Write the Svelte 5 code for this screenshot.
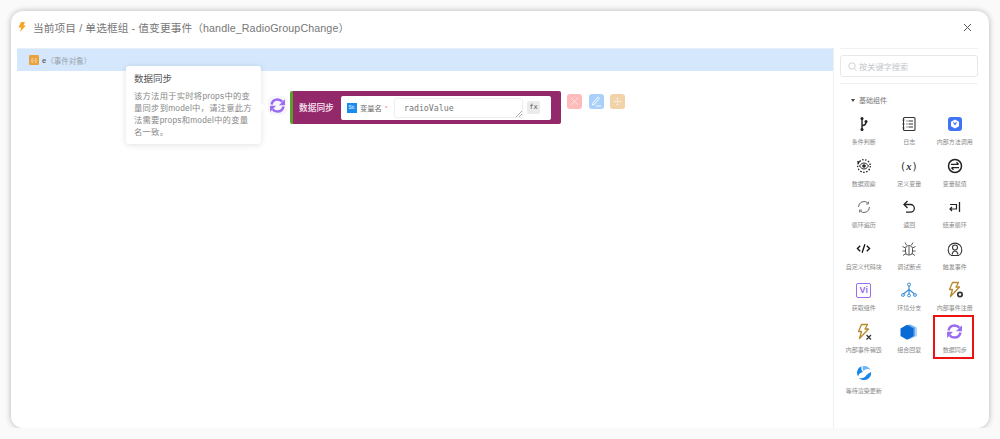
<script>
  const palette = [
    { id: "branch", label: "条件判断" },
    { id: "log", label: "日志" },
    { id: "method", label: "内部方法调用" },
    { id: "watch", label: "数据观察" },
    { id: "define", label: "定义变量" },
    { id: "assign", label: "变量赋值" },
    { id: "loop", label: "循环遍历" },
    { id: "back", label: "返回" },
    { id: "endloop", label: "结束循环" },
    { id: "code", label: "自定义代码块" },
    { id: "debug", label: "调试断点" },
    { id: "trigger", label: "触发事件" },
    { id: "vi", label: "获取组件" },
    { id: "env", label: "环境分支" },
    { id: "reg", label: "内部事件注册" },
    { id: "unreg", label: "内部事件销毁" },
    { id: "combo", label: "组合回复" },
    { id: "sync", label: "数据同步", active: true },
    { id: "wait", label: "等待渲染更新" },
  ];
</script>

{#snippet syncIcon(size)}
  <svg width={size} height={size} viewBox="0 0 24 24" fill="none">
    <path d="M3.500 10.500C4.500 6 8 3.400 12 3.400c2.800 0 5.200 1.200 6.800 3.400" stroke="#9b6cf0" stroke-width="3.600" />
    <path d="M22.500 3v8.500H14z" fill="#9b6cf0" />
    <path d="M20.500 13.500c-1 4.500-4.500 7.100-8.500 7.100-2.800 0-5.200-1.200-6.800-3.400" stroke="#9b6cf0" stroke-width="3.600" />
    <path d="M1.500 21v-8.500H10z" fill="#9b6cf0" />
  </svg>
{/snippet}

{#snippet boltIcon(mark)}
  <svg width="18" height="18" viewBox="0 0 18 18" fill="none">
    <path d="M6.500 1.500h6l-2.500 4.500h3.500L4.500 15.500l2-7H3.500z" stroke="#b88a2e" stroke-width="1.300" stroke-linejoin="round" />
    {#if mark === "gear"}
      <circle cx="14" cy="13.500" r="2.200" stroke="#333" stroke-width="1.700" />
    {:else}
      <path d="M11.500 12l4.500 4.500M16 12l-4.500 4.500" stroke="#333" stroke-width="1.200" />
    {/if}
  </svg>
{/snippet}

{#snippet icon(id)}
  {#if id === "branch"}
    <svg width="16" height="16" viewBox="0 0 16 16" fill="none">
      <path d="M6 2.500v11" stroke="#222" stroke-width="1.400" />
      <path d="M6 9.500c2.500 0 4-1.200 4-3.500" stroke="#222" stroke-width="1.400" />
      <circle cx="6" cy="2.500" r="1.500" fill="#222" />
      <circle cx="6" cy="13.500" r="1.500" fill="#222" />
      <circle cx="10" cy="5.500" r="1.500" fill="#222" />
    </svg>
  {:else if id === "log"}
    <svg width="16" height="16" viewBox="0 0 16 16" fill="none">
      <rect x="2.500" y="1.500" width="11.500" height="13" rx="1" stroke="#333" stroke-width="1.100" />
      <path d="M1.500 4h2M1.500 8h2M1.500 12h2" stroke="#333" stroke-width=".9" />
      <path d="M5.500 5h1M7.500 5H12M5.500 8h1M7.500 8H12M5.500 11h1M7.500 11H12" stroke="#333" stroke-width="1.100" />
    </svg>
  {:else if id === "method"}
    <svg width="16" height="16" viewBox="0 0 16 16">
      <rect x="1" y="1" width="14" height="14" rx="3" fill="#3f74f6" />
      <path d="M8 3.500l4 2.200v4.600L8 12.500l-4-2.200V5.700z" fill="#fff" />
      <path d="M5.800 6.300L8 9.500l2.200-3.200H8.900L8 7.600l-.9-1.300z" fill="#3f74f6" />
    </svg>
  {:else if id === "watch"}
    <svg width="16" height="16" viewBox="0 0 16 16" fill="none">
      <circle cx="8" cy="8" r="6.300" stroke="#222" stroke-width="1.300" stroke-dasharray="1.500 1.500" />
      <path d="M3.500 8C5 5.800 6.400 5 8 5s3 .8 4.500 3C11 10.200 9.600 11 8 11S5 10.200 3.500 8z" stroke="#222" stroke-width="1" />
      <circle cx="8" cy="8" r="1.800" fill="#222" />
      <path d="M1 3l3.500.5L2 6z" fill="#222" />
    </svg>
  {:else if id === "define"}
    <span class="glyph">(<em>x</em>)</span>
  {:else if id === "assign"}
    <svg width="16" height="16" viewBox="0 0 16 16" fill="none">
      <circle cx="8" cy="8" r="6.500" stroke="#222" stroke-width="1.500" />
      <path d="M4 6.300h7.500M9.500 4.300l2 2M12 9.700H4.500M6.500 11.700l-2-2" stroke="#222" stroke-width="1.300" />
    </svg>
  {:else if id === "loop"}
    <svg width="16" height="16" viewBox="0 0 16 16" fill="none">
      <path d="M2.500 8a5.500 5.500 0 0 1 9.500-3.800M13.500 8A5.500 5.500 0 0 1 4 11.800" stroke="#666" stroke-width="1" />
      <path d="M12.500 2.500v2.500H10M3.500 13.500V11H6" stroke="#666" stroke-width=".8" />
    </svg>
  {:else if id === "back"}
    <svg width="16" height="16" viewBox="0 0 16 16" fill="none">
      <path d="M3.500 5.500h6a3.800 3.800 0 0 1 0 7.700H5" stroke="#222" stroke-width="1.300" />
      <path d="M6.500 2L3 5.500 6.500 9" stroke="#222" stroke-width="1.300" />
    </svg>
  {:else if id === "endloop"}
    <svg width="16" height="16" viewBox="0 0 16 16" fill="none">
      <path d="M12.500 3v10" stroke="#222" stroke-width="1.300" />
      <path d="M3 5.500h6.500v4.500H3M5 8l-2 2 2 2" stroke="#222" stroke-width="1.200" />
    </svg>
  {:else if id === "code"}
    <svg width="15" height="15" viewBox="0 0 16 16" fill="none">
      <path d="M4.500 5L1.500 8l3 3M11.500 5l3 3-3 3M9.500 3.500l-3 9" stroke="#111" stroke-width="1.400" />
    </svg>
  {:else if id === "debug"}
    <svg width="16" height="16" viewBox="0 0 16 16" fill="none">
      <rect x="4.500" y="4.500" width="7" height="9.500" rx="3" stroke="#444" stroke-width=".9" />
      <path d="M8 5v9M5.500 4L4 1.500M10.500 4L12 1.500M4.500 7L1.500 5.500M11.500 7l3-1.500M4.500 10h-3M11.500 10h3M5 12.500l-3 2M11 12.500l3 2" stroke="#444" stroke-width=".9" />
    </svg>
  {:else if id === "trigger"}
    <svg width="16" height="16" viewBox="0 0 16 16" fill="none">
      <path d="M3.500 14A6.800 6.800 0 1 1 12.500 14" stroke="#333" stroke-width="1.100" />
      <circle cx="8" cy="6.500" r="2.500" stroke="#333" stroke-width="1.100" />
      <path d="M3.800 14.500h8.400M5 13.500c.5-2 1.500-3.500 3-3.500s2.500 1.500 3 3.500" stroke="#333" stroke-width="1.100" />
    </svg>
  {:else if id === "vi"}
    <span class="vi">Vi</span>
  {:else if id === "env"}
    <svg width="16" height="16" viewBox="0 0 16 16" fill="none" stroke="#3d8fd9">
      <circle cx="8" cy="2.500" r="1.500" stroke-width="1" />
      <path d="M8 4v8M8 7.500L2.500 12M8 7.500L13.500 12" stroke-width="1.200" />
      <circle cx="2" cy="13" r="1.400" stroke-width="1" />
      <circle cx="8" cy="13.500" r="1.400" stroke-width="1" />
      <circle cx="14" cy="13" r="1.400" stroke-width="1" />
    </svg>
  {:else if id === "reg"}
    {@render boltIcon("gear")}
  {:else if id === "unreg"}
    {@render boltIcon("cross")}
  {:else if id === "combo"}
    <svg width="18" height="16" viewBox="0 0 18 16">
      <path d="M9 1l1.500-.5 6.500 3v8.500l-8 3.500z" fill="#a9d2f7" />
      <path d="M8 1.200l1.500-.7 5.500 3v8.500l-7 3.500z" fill="#5ea9ee" />
      <path d="M7 .8l6.500 3.700v7.500L7 15.700.5 12V4.500z" fill="#0a6ad6" />
    </svg>
  {:else if id === "sync"}
    {@render syncIcon(17)}
  {:else if id === "wait"}
    <svg width="16" height="16" viewBox="0 0 16 16">
      <path d="M5.500 1.200C2.800 2.200 1 4.800 1 7.800c0 1.400.4 2.700 1.100 3.800C2.400 9 4.800 7.300 7 7 5.500 5.800 4.900 3.300 5.500 1.200z" fill="#1a85ea" />
      <path d="M7 1c3.500-.6 6.500 1.200 7.700 3.900-2-1.400-5-1.300-7.200 1C6.500 4.800 6.300 2.600 7 1z" fill="#6cb6f2" />
      <path d="M15 7c.2 1 .2 2-.1 3-.9 3-3.600 5-6.900 5-2 0-3.800-.8-5-2.100 3.200 1 5.600-.2 7-2.100 1.400-1.800 3.300-3.100 5-3.800z" fill="#1a85ea" />
    </svg>
  {/if}
{/snippet}

<div class="modal">
  <header>
    <svg class="bolt" width="8" height="10" viewBox="0 0 8 10">
      <path d="M3 0h4L5.500 3.500H8L2 10l1.200-4.500H.5z" fill="#f5a623" />
    </svg>
    <span class="title">当前项目 / 单选框组 - 值变更事件（handle_RadioGroupChange）</span>
    <svg class="close" width="9" height="9" viewBox="0 0 9 9">
      <path d="M1 1l7 7M8 1L1 8" stroke="#555" stroke-width="1" fill="none" />
    </svg>
  </header>

  <div class="body">
    <main class="canvas">
      <div class="params">
        <span class="param-icon">{"{-}"}</span>
        <span class="param-name">e</span>
        <span class="param-desc">（事件对象）</span>
      </div>

      <div class="tooltip">
        <h4>数据同步</h4>
        <p>该方法用于实时将props中的变量同步到model中，请注意此方法需要props和model中的变量名一致。</p>
        <i class="arrow"></i>
      </div>

      <div class="node">
        <span class="node-icon">{@render syncIcon(17)}</span>
        <div class="block">
          <span class="block-name">数据同步</span>
          <div class="field">
            <span class="str">Str.</span>
            <span class="field-label">变量名</span>
            <span class="required">*</span>
            <div class="input">
              radioValue
              <svg class="resize" width="6" height="6" viewBox="0 0 6 6">
                <path d="M0 6l6-6M3 6l3-3" stroke="#888" stroke-width=".7" />
              </svg>
            </div>
            <span class="fx">fx</span>
          </div>
        </div>
        <div class="actions">
          <span class="act red">
            <svg width="9" height="9" viewBox="0 0 9 9"><path d="M1 1l7 7M8 1L1 8" stroke="#fff" stroke-width=".7" opacity=".7" /></svg>
          </span>
          <span class="act blue">
            <svg width="11" height="11" viewBox="0 0 11 11" fill="none"><path d="M2 7l5-6 1.500 1.300-5 6-2 .7zM5 10h5" stroke="#fff" stroke-width=".9" /></svg>
          </span>
          <span class="act tan">
            <svg width="11" height="11" viewBox="0 0 11 11" fill="none"><path d="M5.500 2v7M2 5.500h7M4.500 3l1-1 1 1M4.500 8l1 1 1-1M3 4.500l-1 1 1 1M8 4.500l1 1-1 1" stroke="#fff" stroke-width=".6" opacity=".8" /></svg>
          </span>
        </div>
      </div>
    </main>

    <aside>
      <div class="search-wrap">
        <div class="search">
          <svg width="9" height="9" viewBox="0 0 9 9" fill="none">
            <circle cx="4" cy="4" r="3.200" stroke="#c4c7cc" stroke-width=".8" />
            <path d="M6.500 6.500L8.500 8.500" stroke="#c4c7cc" stroke-width=".8" />
          </svg>
          <span>按关键字搜索</span>
        </div>
      </div>
      <div class="group">
        <i class="caret"></i>
        <span>基础组件</span>
      </div>
      <div class="grid">
        {#each palette as item (item.id)}
          <div class="cell" class:active={item.active}>
            <span class="cell-icon">{@render icon(item.id)}</span>
            <span class="cell-label">{item.label}</span>
          </div>
        {/each}
      </div>
    </aside>
  </div>
</div>

<style>
  :global(body) {
    background: #fafafa;
    font-family: "Liberation Sans", "Noto Sans CJK SC", sans-serif;
  }

  .modal {
    box-sizing: border-box;
    width: 978px;
    height: 417px;
    margin: 11px 0 0 11px;
    padding: 0 6px;
    display: flex;
    flex-direction: column;
    background: #fff;
    border-radius: 12px;
    box-shadow: 0 0 6px rgba(0, 0, 0, 0.28);
    overflow: hidden;
  }

  header {
    height: 37px;
    flex: none;
    display: flex;
    align-items: center;
    gap: 7px;
    padding: 0 11px 5px 1px;
    box-sizing: border-box;
  }

  .bolt {
    flex: none;
  }

  .title {
    font-size: 10.700px;
    color: #777;
    letter-spacing: 0.1px;
  }

  .close {
    margin-left: auto;
  }

  .body {
    flex: 1;
    display: flex;
    min-height: 0;
  }

  .canvas {
    position: relative;
    flex: none;
    width: 816px;
    border-top: 1px solid #e6eef7;
    border-right: 1px solid #eef0f2;
  }

  .params {
    height: 22px;
    display: flex;
    align-items: center;
    padding-left: 12px;
    background: #d4e7fc;
    font-size: 7.500px;
    color: #9aa3ad;
  }

  .param-icon {
    width: 10px;
    height: 10px;
    margin-right: 3px;
    border-radius: 1px;
    background: #e8a33d;
    color: #fff;
    font-size: 5.500px;
    line-height: 10px;
    text-align: center;
  }

  .param-name {
    color: #666;
    font-weight: 700;
  }

  .tooltip {
    position: absolute;
    left: 109px;
    top: 17px;
    box-sizing: border-box;
    width: 135px;
    height: 78px;
    padding: 6px 8px;
    background: #fff;
    border-radius: 3px;
    box-shadow: 0 1px 6px rgba(0, 0, 0, 0.12);
  }

  .tooltip h4 {
    margin: 0 0 4px;
    font-size: 9.500px;
    line-height: 14px;
    font-weight: 400;
    color: #555;
  }

  .tooltip p {
    margin: 0;
    font-size: 8.300px;
    line-height: 12px;
    color: #888;
    letter-spacing: 0.250px;
  }

  .arrow {
    position: absolute;
    right: -3px;
    top: 38px;
    width: 6px;
    height: 6px;
    background: #fff;
    transform: rotate(45deg);
  }

  .node {
    position: absolute;
    left: 251px;
    top: 42px;
    display: flex;
    align-items: flex-start;
  }

  .node-icon {
    width: 19px;
    height: 19px;
    margin: 5px 3px 0 0;
    display: flex;
    align-items: center;
    justify-content: center;
    background: #f7f7fb;
    border-radius: 5px;
  }

  .block {
    box-sizing: border-box;
    width: 271px;
    height: 33px;
    display: flex;
    align-items: center;
    padding: 0 10px 0 6px;
    background-color: #93286a;
    background-image: radial-gradient(rgba(255, 255, 255, 0.12) 0.5px, transparent 0.6px);
    background-size: 4px 4px;
    border-left: 3px solid #5aa02c;
    border-radius: 2px;
  }

  .block-name {
    width: 42px;
    flex: none;
    font-size: 8.700px;
    color: #ecd4e2;
    font-weight: 700;
  }

  .field {
    box-sizing: border-box;
    flex: 1;
    height: 24px;
    display: flex;
    align-items: center;
    padding: 0 11px 0 6px;
    background: #fff;
    border-radius: 2px;
  }

  .str {
    width: 10px;
    height: 10px;
    flex: none;
    background: #1b8cec;
    color: #fff;
    font-size: 4.500px;
    line-height: 10px;
    text-align: center;
  }

  .field-label {
    margin-left: 3px;
    font-size: 7.300px;
    color: #666;
  }

  .required {
    margin-left: 3px;
    width: 9px;
    font-size: 6px;
    color: #f56c6c;
  }

  .input {
    box-sizing: border-box;
    position: relative;
    width: 129px;
    height: 20px;
    padding-left: 9px;
    border: 1px solid #eceef1;
    border-radius: 3px;
    font-family: "DejaVu Sans Mono", "Liberation Mono", monospace;
    font-size: 8.300px;
    line-height: 18px;
    color: #777;
  }

  .resize {
    position: absolute;
    right: 0;
    bottom: 0;
  }

  .fx {
    width: 13px;
    height: 13px;
    margin-left: 4px;
    background: #ebebeb;
    border-radius: 2px;
    font-family: "DejaVu Sans Mono", monospace;
    font-size: 7px;
    line-height: 13px;
    text-align: center;
    color: #555;
  }

  .actions {
    display: flex;
    gap: 6.500px;
    margin: 3px 0 0 6px;
  }

  .act {
    width: 15px;
    height: 15px;
    display: flex;
    align-items: center;
    justify-content: center;
    border-radius: 3px;
  }

  .red {
    background: #fdbcbc;
  }

  .blue {
    background: #a9d0fb;
  }

  .tan {
    background: #f2d2a8;
  }

  aside {
    flex: 1;
    min-width: 0;
    padding: 0 5px 0 6px;
  }

  .search-wrap {
    padding: 6px 0;
    border-top: 1px solid #f0f1f3;
  }

  .search {
    box-sizing: border-box;
    width: 138px;
    height: 22px;
    display: flex;
    align-items: center;
    gap: 2px;
    padding-left: 7px;
    border: 1px solid #e6e8eb;
    border-radius: 3px;
    font-size: 8.200px;
    color: #c4c7cc;
  }

  .group {
    display: flex;
    align-items: center;
    gap: 4px;
    height: 30px;
    padding: 4px 0 1px 11px;
    box-sizing: border-box;
    border-top: 1px solid #f0f1f3;
    font-size: 7px;
    color: #777;
  }

  .caret {
    width: 0;
    height: 0;
    border: 2px solid transparent;
    border-top: 3px solid #444;
    border-bottom: 0;
  }

  .grid {
    display: grid;
    grid-template-columns: repeat(3, 45.500px);
    grid-auto-rows: 41.500px;
    margin-left: 1px;
  }

  .cell {
    box-sizing: border-box;
    position: relative;
    display: flex;
    flex-direction: column;
    align-items: center;
  }

  .cell-icon {
    height: 22px;
    display: flex;
    align-items: center;
    justify-content: center;
    color: #222;
  }

  .cell-label {
    margin-top: 3px;
    font-size: 6px;
    line-height: 9px;
    color: #888;
    white-space: nowrap;
  }

  .cell.active::after {
    content: "";
    position: absolute;
    left: 1px;
    top: -6px;
    width: 41px;
    height: 44px;
    border: 2px solid #e11;
    box-sizing: border-box;
  }

  .glyph {
    font-family: "DejaVu Sans", sans-serif;
    font-size: 10.500px;
    letter-spacing: 1px;
    color: #333;
  }

  .glyph em {
    font-family: "Liberation Serif", serif;
    font-weight: 700;
  }

  .vi {
    box-sizing: border-box;
    width: 15px;
    height: 15px;
    border: 1.200px solid #9a6cf0;
    border-radius: 2px;
    color: #9a6cf0;
    font-size: 9px;
    font-weight: 700;
    line-height: 13px;
    text-align: center;
  }
</style>
